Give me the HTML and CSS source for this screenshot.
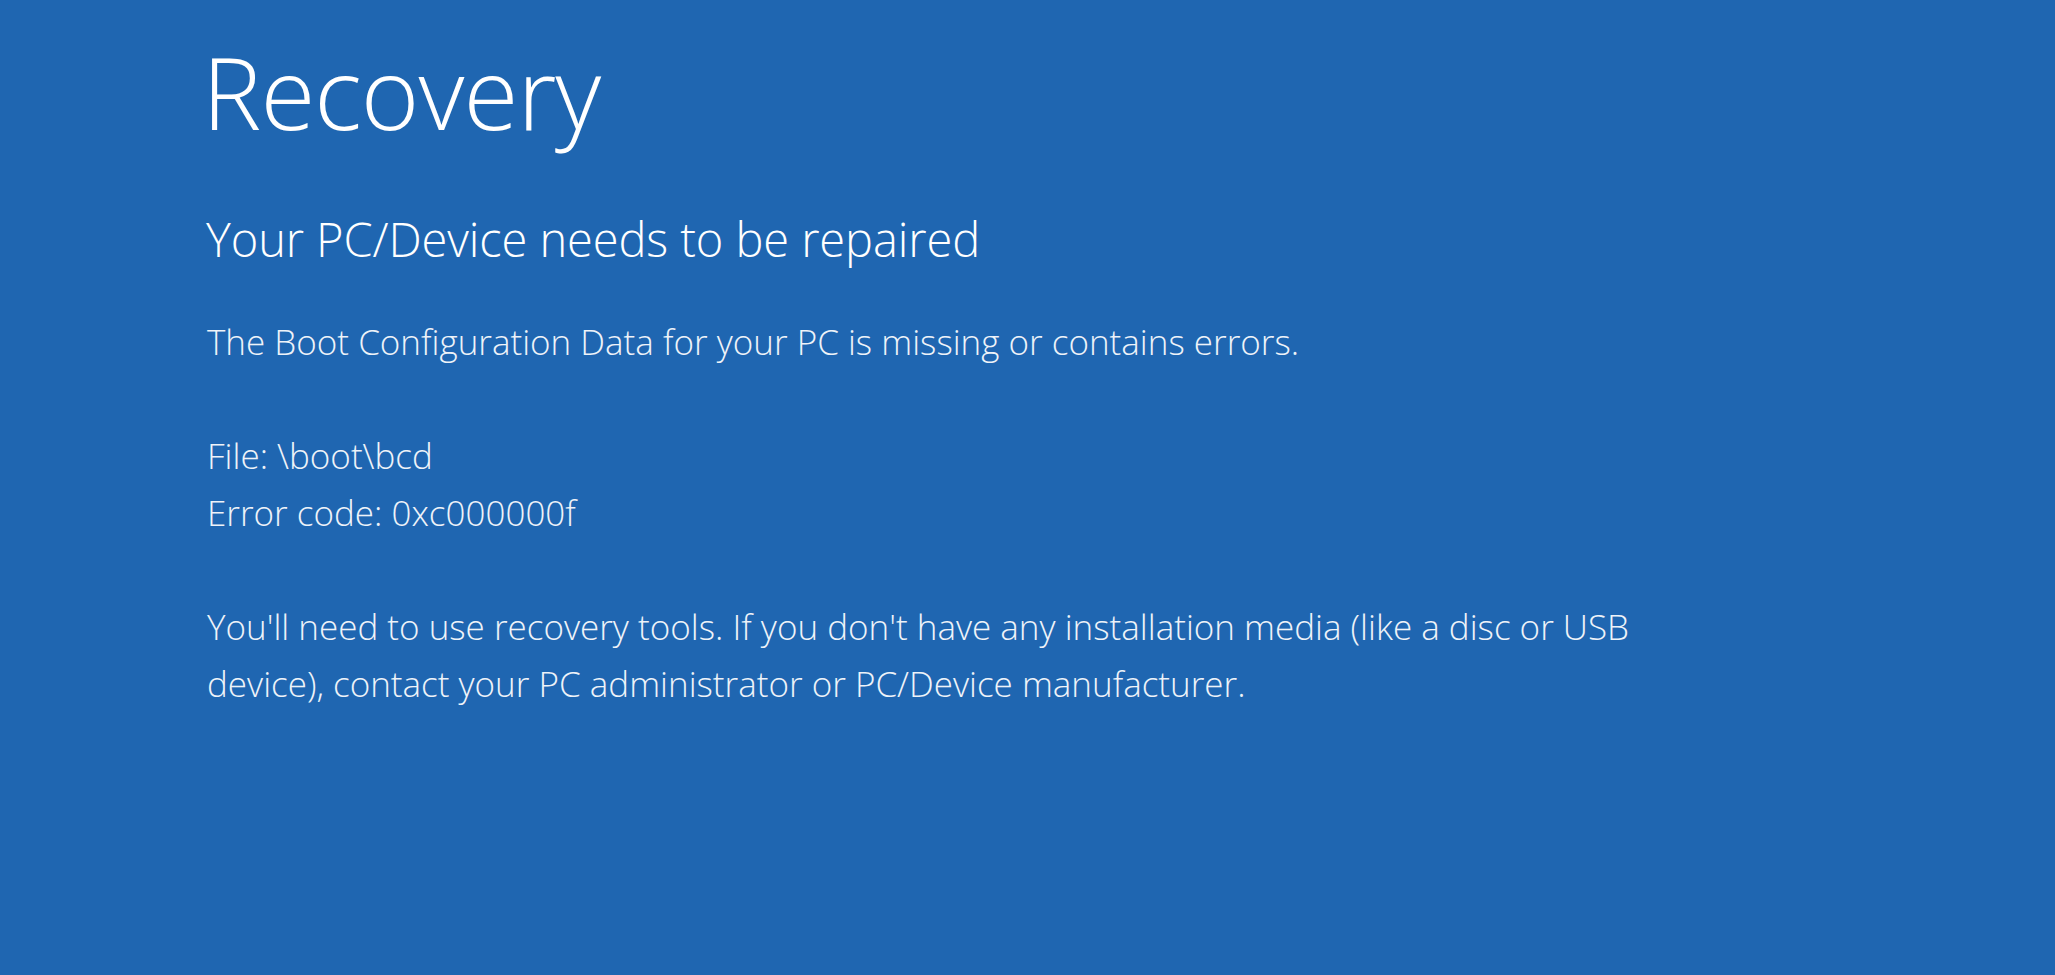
FILE: index.html
```html
<!DOCTYPE html>
<html lang="en">
<head>
    <meta charset="UTF-8" />
    <meta name="viewport" content="width=device-width, initial-scale=1.0"/>
    <title>Recovery</title>
    <link rel="stylesheet" href="styles.css">
</head>
<body>
<div class="screen">
    <h1 class="title">Recovery</h1>
    <h2 class="subtitle">Your PC/Device needs to be repaired</h2>

    <p class="message">The Boot Configuration Data for your PC is missing or contains errors.</p>

    <p class="message">
        File: \boot\bcd<br>
        Error code: 0xc000000f
    </p>

    <p class="message">
        You'll need to use recovery tools. If you don't have any installation media (like a disc or USB<br>
        device), contact your PC administrator or PC/Device manufacturer.
    </p>
</div>
</body>
</html>
```

FILE: styles.css
```css
html, body {
  margin: 0;
  height: 100%;
}

body {
  background-color: #1f66b1;
  color: #fff;
  font-family: 'Open Sans', 'Segoe UI', sans-serif;
}

.screen {
  padding: 31px 0 0 202px;
}

.title {
  margin: 0;
  font-size: 100px;
  font-weight: 300;
  line-height: 120px;
  letter-spacing: -1px;
}

.subtitle {
  margin: 58px 0 0 4px;
  font-size: 47px;
  font-weight: 300;
  line-height: 60px;
  letter-spacing: -0.1px;
}

.message {
  margin: 44px 0 0 5px;
  font-size: 35px;
  font-weight: 350;
  line-height: 57px;
  color: #eef3f9;
}

.message + .message {
  margin-top: 57px;
}
```
